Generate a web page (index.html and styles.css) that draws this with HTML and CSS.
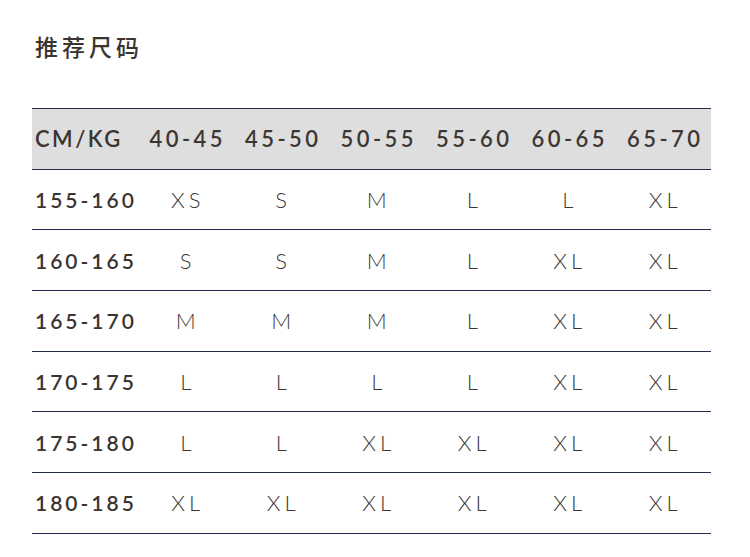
FILE: index.html
```html
<!DOCTYPE html>
<html lang="zh">
<head>
<meta charset="utf-8">
<link rel="stylesheet" href="styles.css">
</head>
<body>
<div class="page">
  <h1 class="title">推荐尺码</h1>
  <div class="table">
    <div class="row head">
      <div class="cell label">CM/KG</div>
      <div class="cell">40-45</div>
      <div class="cell">45-50</div>
      <div class="cell">50-55</div>
      <div class="cell">55-60</div>
      <div class="cell">60-65</div>
      <div class="cell">65-70</div>
    </div>
    <div class="row">
      <div class="cell label">155-160</div>
      <div class="cell">XS</div><div class="cell">S</div><div class="cell">M</div><div class="cell">L</div><div class="cell">L</div><div class="cell">XL</div>
    </div>
    <div class="row">
      <div class="cell label">160-165</div>
      <div class="cell">S</div><div class="cell">S</div><div class="cell">M</div><div class="cell">L</div><div class="cell">XL</div><div class="cell">XL</div>
    </div>
    <div class="row">
      <div class="cell label">165-170</div>
      <div class="cell">M</div><div class="cell">M</div><div class="cell">M</div><div class="cell">L</div><div class="cell">XL</div><div class="cell">XL</div>
    </div>
    <div class="row">
      <div class="cell label">170-175</div>
      <div class="cell">L</div><div class="cell">L</div><div class="cell">L</div><div class="cell">L</div><div class="cell">XL</div><div class="cell">XL</div>
    </div>
    <div class="row">
      <div class="cell label">175-180</div>
      <div class="cell">L</div><div class="cell">L</div><div class="cell">XL</div><div class="cell">XL</div><div class="cell">XL</div><div class="cell">XL</div>
    </div>
    <div class="row">
      <div class="cell label">180-185</div>
      <div class="cell">XL</div><div class="cell">XL</div><div class="cell">XL</div><div class="cell">XL</div><div class="cell">XL</div><div class="cell">XL</div>
    </div>
  </div>
</div>
</body>
</html>
```
FILE: styles.css
```css
html, body {
  margin: 0;
  padding: 0;
  background: #ffffff;
}
.page {
  padding: 34px 39px 0 32px;
  font-family: "Lato", "Liberation Sans", "Noto Sans CJK SC", sans-serif;
  color: #3b3431;
}
.title {
  margin: 0 0 0 3px;
  font-family: "Noto Sans CJK SC", sans-serif;
  font-size: 23px;
  line-height: 24px;
  font-weight: 500;
  letter-spacing: 4px;
  color: #3a3431;
}
.table {
  margin-top: 50px;
  width: 679px;
  border-top: 1px solid #252d4c;
}
.row {
  display: grid;
  grid-template-columns: 106px repeat(6, 1fr);
  align-items: center;
  height: 59.7px;
  border-bottom: 1px solid #252d4c;
}
.row.head {
  background: #dedede;
}
.cell {
  white-space: nowrap;
  text-align: center;
  font-size: 22px;
  font-weight: 300;
  letter-spacing: 4px;
  padding-left: 4px;
  color: #3d3734;
}
.cell.label {
  text-align: left;
  padding-left: 3px;
  font-size: 21px;
  font-weight: 600;
  letter-spacing: 3px;
  color: #3b3431;
}
.head .cell {
  font-size: 22px;
  font-weight: 600;
  letter-spacing: 3.5px;
}
.head .cell.label {
  letter-spacing: 2.5px;
}
```
